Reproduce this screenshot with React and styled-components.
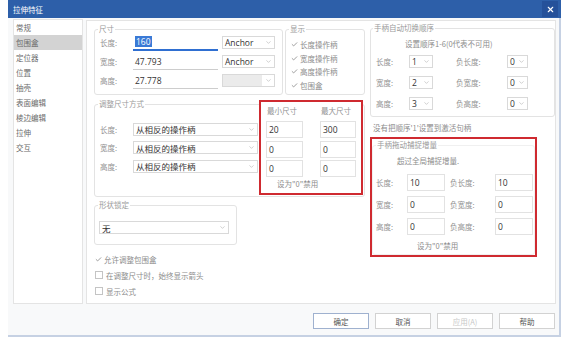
import React from 'react';
import styled, { createGlobalStyle } from 'styled-components';
import { ChevronDown, Check, X } from 'lucide-react';

const GlobalStyle = createGlobalStyle`
  body {
    margin: 0;
    background: #fff;
    font-family: "Noto Sans CJK SC", "Noto Sans", sans-serif;
  }
`;

const navItems = ['常规', '包围盒', '定位器', '位置', '抽壳', '表面编辑', '棱边编辑', '拉伸', '交互'];

const sizeRows = [
  { label: '长度:', value: '160', anchor: 'Anchor', active: true },
  { label: '宽度:', value: '47.793', anchor: 'Anchor' },
  { label: '高度:', value: '27.778', anchor: '', disabled: true },
];

const showItems = ['长度操作柄', '宽度操作柄', '高度操作柄', '包围盒'];

const orderRows = [
  ['长度:', '1', '负长度:', '0'],
  ['宽度:', '2', '负宽度:', '0'],
  ['高度:', '3', '负高度:', '0'],
];

const snapRows = [
  ['长度:', '10', '负长度:', '10'],
  ['宽度:', '0', '负宽度:', '0'],
  ['高度:', '0', '负高度:', '0'],
];

const Dropdown = ({ value, width, disabled }) => (
  <Select $w={width} $disabled={disabled}>
    <SelectText $disabled={disabled}>{value}</SelectText>
    <ChevronDown size={7} color="#b0b0b0" strokeWidth={2} />
  </Select>
);

const App = () => {
  return (
    <>
      <GlobalStyle />
      <Dialog>
        <TitleBar>
          <span>拉伸特征</span>
          <Close><X size={9} strokeWidth={3} color="#fff" /></Close>
        </TitleBar>
        <Body>
          <Sidebar>
            {navItems.map((n) => (
              <NavItem key={n} $active={n === '包围盒'}>{n}</NavItem>
            ))}
          </Sidebar>
          <Content>
            <LeftCol>
              <TopRow>
                <Group $w={189}>
                  <Legend>尺寸</Legend>
                  <SizeRows>
                    {sizeRows.map((r) => (
                      <Row key={r.label} $h={17}>
                        <Label $w={33}>{r.label}</Label>
                        <SizeInput $active={r.active}>
                          {r.active ? <Selected>{r.value}</Selected> : r.value}
                        </SizeInput>
                        <Dropdown value={r.anchor} width={53} disabled={r.disabled} />
                      </Row>
                    ))}
                  </SizeRows>
                </Group>
                <Group $w={80}>
                  <Legend>显示</Legend>
                  <ShowList>
                    {showItems.map((s) => (
                      <CheckItem key={s} $h={13.5}>
                        <Check size={7} color="#7a7a7a" strokeWidth={2.5} />
                        {s}
                      </CheckItem>
                    ))}
                  </ShowList>
                </Group>
              </TopRow>

              <Group $w={271} $mt={3}>
                <Legend>调整尺寸方式</Legend>
                <ResizeBody>
                  <ResizeRows>
                    {['长度:', '宽度:', '高度:'].map((l) => (
                      <Row key={l} $h={18.5}>
                        <Label $w={33}>{l}</Label>
                        <Dropdown value="从相反的操作柄" width={125} />
                      </Row>
                    ))}
                  </ResizeRows>
                  <MinMax>
                    <MinMaxHead>
                      <Label $w={54} $pl={1}>最小尺寸</Label>
                      <Label $pl={1}>最大尺寸</Label>
                    </MinMaxHead>
                    <MinMaxGrid>
                      <Field>20</Field>
                      <Field>300</Field>
                      <Field>0</Field>
                      <Field>0</Field>
                      <Field>0</Field>
                      <Field>0</Field>
                    </MinMaxGrid>
                    <Note $pl={11} $mt={1}>设为"0"禁用</Note>
                  </MinMax>
                </ResizeBody>
              </Group>

              <Group $w={143} $mt={2}>
                <Legend>形状锁定</Legend>
                <LockBody>
                  <Dropdown value="无" width={130} />
                </LockBody>
              </Group>

              <Options>
                <CheckItem $h={16} $pl={1}>
                  <Check size={7} color="#7a7a7a" strokeWidth={2.5} />
                  允许调整包围盒
                </CheckItem>
                <CheckItem $h={16} $pl={1}>
                  <Box />
                  在调整尺寸时，始终显示箭头
                </CheckItem>
                <CheckItem $h={16} $pl={1}>
                  <Box />
                  显示公式
                </CheckItem>
              </Options>
            </LeftCol>

            <RightCol>
              <Group $w={185}>
                <Legend $ml={2}>手柄自动切换顺序</Legend>
                <Note $pl={34} $mt={4}>设置顺序1-6(0代表不可用)</Note>
                <OrderGrid>
                  {orderRows.map(([a, b, c, d]) => (
                    <React.Fragment key={a}>
                      <Label>{a}</Label>
                      <Dropdown value={b} width={24} />
                      <Label $pl={23}>{c}</Label>
                      <Dropdown value={d} width={21} />
                    </React.Fragment>
                  ))}
                </OrderGrid>
              </Group>
              <Note $pl={3} $mt={5}>没有把顺序'1'设置到激活句柄</Note>
              <Highlight>
                <Group $w={163} $faint>
                  <Legend>手柄拖动捕捉增量</Legend>
                  <Note $pl={24} $mt={4}>超过全局捕捉增量.</Note>
                  <SnapGrid>
                    {snapRows.map(([a, b, c, d]) => (
                      <React.Fragment key={a}>
                        <Label>{a}</Label>
                        <Field>{b}</Field>
                        <Label $pl={5}>{c}</Label>
                        <Field>{d}</Field>
                      </React.Fragment>
                    ))}
                  </SnapGrid>
                  <Note $pl={44} $mt={5} $mb={3}>设为"0"禁用</Note>
                </Group>
              </Highlight>
            </RightCol>
          </Content>
        </Body>
        <Footer>
          <Button $primary>确定</Button>
          <Button>取消</Button>
          <Button $disabled>应用(A)</Button>
          <Button>帮助</Button>
        </Footer>
      </Dialog>
    </>
  );
};

const Dialog = styled.div`
  margin-left: 8px;
  width: 553px;
  height: 337px;
  box-sizing: border-box;
  border-right: 2px solid #c6d1e3;
  border-bottom: 2px solid #c6d1e3;
  background: #f8f9fa;
  display: flex;
  flex-direction: column;
`;
const TitleBar = styled.div`
  height: 18px;
  margin-right: -2px;
  padding-left: 5px;
  background: #2d5fa9;
  color: #fff;
  font-size: 7.5px;
  display: flex;
  align-items: center;
  justify-content: space-between;
`;
const Close = styled.div`
  width: 16px;
  height: 16px;
  margin-right: 3px;
  background: #25519a;
  display: flex;
  align-items: center;
  justify-content: center;
`;
const Body = styled.div`
  height: 286px;
  box-sizing: border-box;
  padding: 1px 3px 0 5px;
  display: flex;
  gap: 3px;
`;
const Sidebar = styled.div`
  width: 70px;
  box-sizing: border-box;
  background: #fff;
  border: 1px solid #e4e4e4;
`;
const NavItem = styled.div`
  height: 15px;
  line-height: 15px;
  padding-left: 2px;
  font-size: 7.5px;
  color: #6a6a6a;
  background: ${(p) => (p.$active ? '#d3d3d3' : 'transparent')};
`;
const Content = styled.div`
  flex: 1;
  margin-top: 1px;
  box-sizing: border-box;
  background: #fff;
  border: 1px solid #e4e4e4;
  padding: 2px 0 0 7px;
  display: flex;
  gap: 5px;
`;
const LeftCol = styled.div`
  width: 271px;
  display: flex;
  flex-direction: column;
`;
const RightCol = styled.div`
  width: 185px;
  margin-top: -1px;
  display: flex;
  flex-direction: column;
`;
const TopRow = styled.div`
  display: flex;
  gap: 2px;
`;
const Group = styled.fieldset`
  margin: ${(p) => p.$mt || 0}px 0 0 0;
  padding: 0;
  min-width: 0;
  width: ${(p) => p.$w}px;
  box-sizing: border-box;
  border: 1px solid ${(p) => (p.$faint ? '#f0f0f0' : '#e3e3e3')};
  border-radius: 3px;
`;
const Legend = styled.legend`
  margin-left: ${(p) => (p.$ml !== undefined ? p.$ml : 3)}px;
  padding: 0 1px;
  font-size: 7.5px;
  line-height: 12px;
  color: #9a9a9a;
`;
const Label = styled.span`
  flex-shrink: 0;
  width: ${(p) => (p.$w ? `${p.$w}px` : 'auto')};
  padding-left: ${(p) => p.$pl || 0}px;
  box-sizing: border-box;
  font-size: 7.5px;
  color: #929292;
  white-space: nowrap;
`;
const Row = styled.div`
  height: ${(p) => p.$h}px;
  display: flex;
  align-items: center;
`;
const SizeRows = styled.div`
  margin-top: -1px;
  padding: 0 7px 3px 5px;
  display: flex;
  flex-direction: column;
  gap: 2px;
`;
const SizeInput = styled.div`
  width: 85px;
  height: 17px;
  margin-right: 4px;
  box-sizing: border-box;
  padding-left: 2px;
  display: flex;
  align-items: center;
  border-bottom: ${(p) => (p.$active ? '2px solid #2f6fd1' : '1px solid #cdcdcd')};
  font-family: "Open Sans", sans-serif;
  font-size: 8.5px;
  color: #333;
`;
const Selected = styled.span`
  background: #3a7ad6;
  color: #fff;
  padding: 0 1px;
`;
const Select = styled.div`
  width: ${(p) => p.$w}px;
  height: 13px;
  flex-shrink: 0;
  box-sizing: border-box;
  border: 1px solid #d9d9d9;
  background: #fff;
  display: flex;
  align-items: center;
  justify-content: space-between;
  padding-right: 2px;
`;
const SelectText = styled.span`
  flex: 1;
  align-self: stretch;
  display: flex;
  align-items: center;
  padding-left: 2px;
  margin-right: 3px;
  background: ${(p) => (p.$disabled ? '#ebebeb' : 'transparent')};
  font-family: "Open Sans", "Noto Sans CJK SC", sans-serif;
  font-size: 8.5px;
  color: #333;
  white-space: nowrap;
`;
const ShowList = styled.div`
  padding: 3px 0 2px 5px;
`;
const CheckItem = styled.div`
  height: ${(p) => p.$h}px;
  padding-left: ${(p) => p.$pl || 0}px;
  display: flex;
  align-items: center;
  gap: 2px;
  font-size: 7.5px;
  color: #8c8c8c;
  white-space: nowrap;
`;
const Box = styled.span`
  width: 6px;
  height: 6px;
  border: 1px solid #c4c4c4;
  margin-right: 1px;
`;
const ResizeBody = styled.div`
  display: flex;
  align-items: flex-start;
  padding: 0 1px 1px 5px;
`;
const ResizeRows = styled.div`
  margin-top: 10px;
  display: flex;
  flex-direction: column;
`;
const MinMax = styled.div`
  width: 104px;
  margin: -10px 0 0 1px;
  box-sizing: border-box;
  border: 2px solid #cf2a30;
  background: #fff;
  padding: 2px 0 4px 5px;
`;
const MinMaxHead = styled.div`
  height: 12px;
  margin-bottom: 5px;
  display: flex;
  align-items: center;
`;
const MinMaxGrid = styled.div`
  display: grid;
  grid-template-columns: 37px 36px;
  grid-auto-rows: 17px;
  column-gap: 17px;
  row-gap: 2.5px;
`;
const Field = styled.div`
  height: 17px;
  box-sizing: border-box;
  border: 1px solid #e2e2e2;
  background: #fff;
  padding-left: 2px;
  display: flex;
  align-items: center;
  font-family: "Open Sans", sans-serif;
  font-size: 8.5px;
  color: #333;
`;
const Note = styled.div`
  padding-left: ${(p) => p.$pl || 0}px;
  margin-top: ${(p) => p.$mt || 0}px;
  margin-bottom: ${(p) => p.$mb || 0}px;
  line-height: 11px;
  font-size: 7.5px;
  color: #8c8c8c;
  white-space: nowrap;
`;
const LockBody = styled.div`
  padding: 10px 0 10px 4px;
`;
const Options = styled.div`
  margin-top: 6px;
  display: flex;
  flex-direction: column;
`;
const OrderGrid = styled.div`
  margin-top: 6px;
  padding: 0 0 6px 5px;
  display: grid;
  grid-template-columns: 33px 24px 74px 21px;
  grid-auto-rows: 13px;
  row-gap: 8px;
  align-items: center;
`;
const Highlight = styled.div`
  width: 167px;
  margin-top: 4px;
  box-sizing: border-box;
  border: 2px solid #cf2a30;
`;
const SnapGrid = styled.div`
  margin-top: 8px;
  padding-left: 3px;
  display: grid;
  grid-template-columns: 31px 38px 50px 38px;
  grid-auto-rows: 17px;
  row-gap: 5px;
  align-items: center;
`;
const Footer = styled.div`
  flex: 1;
  display: flex;
  justify-content: flex-end;
  gap: 6px;
  padding: 9px 4px 0 0;
`;
const Button = styled.div`
  width: 56px;
  height: 16px;
  box-sizing: border-box;
  border: 1px solid ${(p) => (p.$primary ? '#9fb1cf' : '#d2d2d2')};
  background: #fff;
  display: flex;
  align-items: center;
  justify-content: center;
  font-size: 7.5px;
  color: ${(p) => (p.$disabled ? '#c8c8c8' : '#555')};
`;

export default App;
